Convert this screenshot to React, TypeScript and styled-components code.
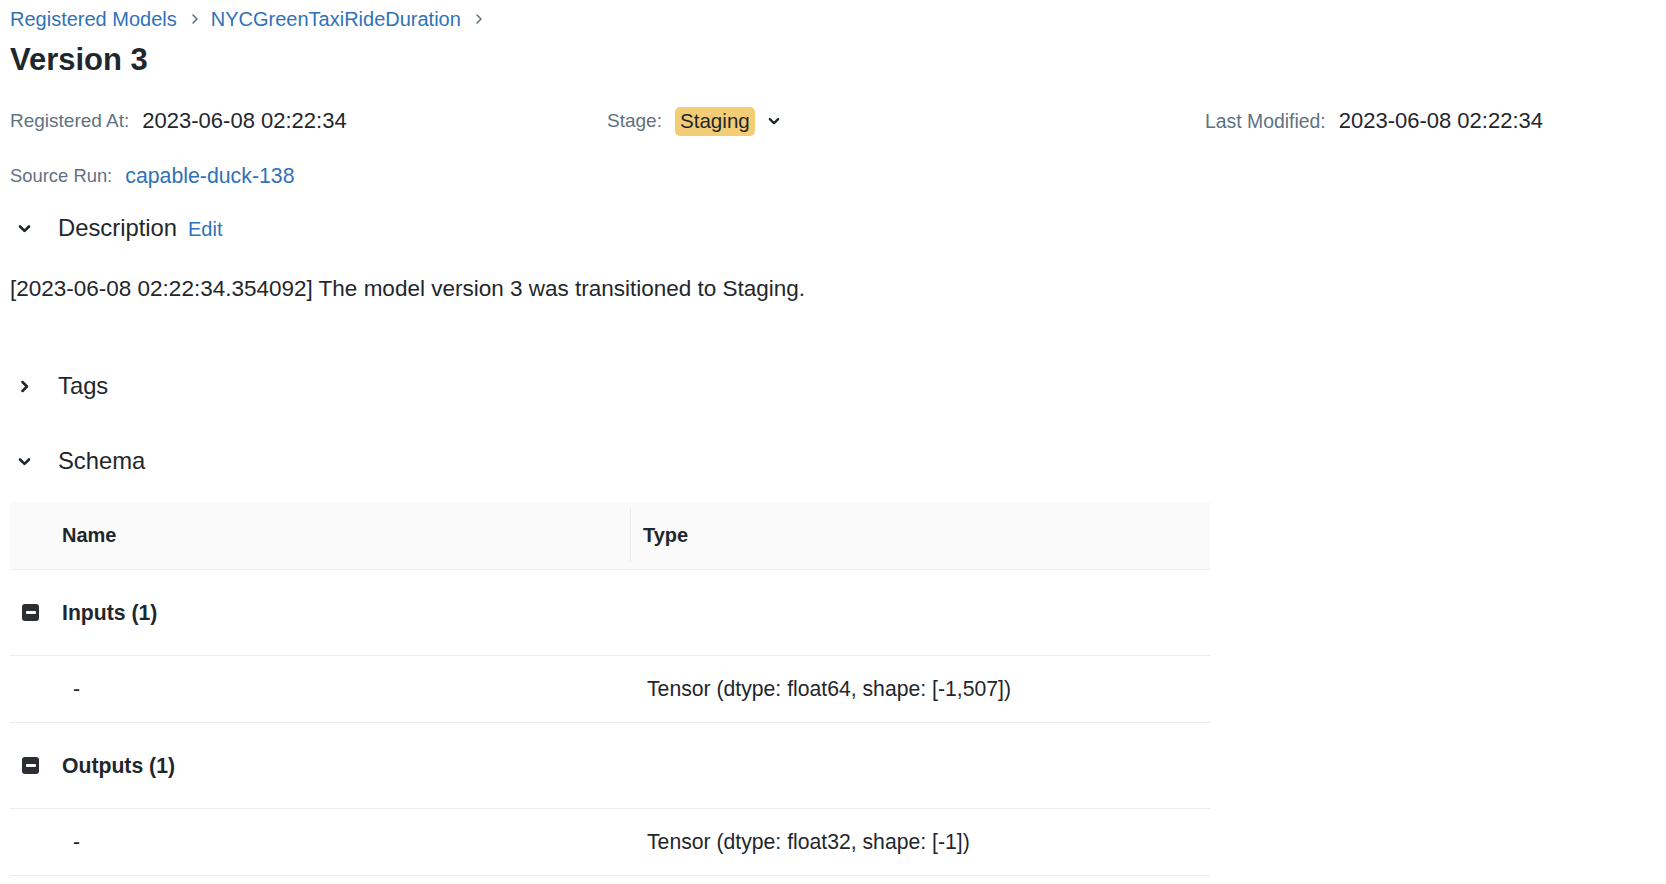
import styled, { createGlobalStyle } from 'styled-components';

const GlobalStyle = createGlobalStyle`
  *, *::before, *::after {
    box-sizing: border-box;
  }
  body {
    margin: 0;
    background: #fff;
    font-family: "Liberation Sans", Arial, sans-serif;
    color: #1f272d;
    overflow: hidden;
  }
`;

const Page = styled.div`
  padding: 0 10px;
  width: 1666px;
`;

const Breadcrumb = styled.nav`
  height: 38px;
  display: flex;
  align-items: center;
  font-size: 20px;
`;

const Crumb = styled.a`
  color: #2f72b8;
  text-decoration: none;
`;

const CrumbSep = styled.span`
  display: inline-flex;
  margin: 0 12px 0 14px;
  color: #5f7281;
`;

const Title = styled.h1`
  margin: 2px 0 0;
  height: 40px;
  line-height: 40px;
  font-size: 31px;
  font-weight: 700;
  color: #1f272d;
`;

const MetaRow = styled.div<{ $top: number }>`
  margin-top: ${(p) => p.$top}px;
  height: 40px;
  display: grid;
  grid-template-columns: 597px 598px 1fr;
  align-items: center;
`;

const MetaItem = styled.div`
  display: flex;
  align-items: center;
  gap: 13px;
`;

const Label = styled.span<{ $size?: number }>`
  font-size: ${(p) => p.$size ?? 19}px;
  color: #5f7281;
`;

const Value = styled.span`
  font-size: 22px;
  color: #1f272d;
`;

const LinkValue = styled.a`
  font-size: 21.3px;
  color: #2f72b8;
  text-decoration: none;
`;

const StageBadge = styled.span`
  display: inline-flex;
  align-items: center;
  height: 29px;
  padding: 0 5px;
  border-radius: 5px;
  background: #f3cc76;
  font-size: 20.6px;
  color: #1f272d;
`;

const StageCaret = styled.span`
  display: inline-flex;
`;

const SectionHeader = styled.div<{ $top: number }>`
  margin-top: ${(p) => p.$top}px;
  height: 40px;
  display: flex;
  align-items: center;
`;

const Toggle = styled.span`
  width: 29px;
  display: inline-flex;
  justify-content: center;
  margin-right: 19px;
`;

const SectionTitle = styled.span`
  font-size: 23.8px;
  color: #1f272d;
`;

const EditLink = styled.a`
  margin-left: 11px;
  font-size: 20px;
  color: #2f72b8;
  text-decoration: none;
  position: relative;
  top: 1px;
`;

const DescText = styled.p`
  margin: 26px 0 0;
  line-height: 30px;
  font-size: 22.5px;
  color: #1f272d;
`;

const Table = styled.div`
  margin-top: 21px;
  width: 1200px;
`;

const Row = styled.div<{ $height: number; $head?: boolean }>`
  display: grid;
  grid-template-columns: 620px 1fr;
  align-items: center;
  height: ${(p) => p.$height}px;
  border-bottom: 1px solid #ececec;
  background: ${(p) => (p.$head ? '#fafafa' : '#fff')};
`;

const HeadCell = styled.div<{ $pad: number; $divider?: boolean }>`
  position: relative;
  padding-left: ${(p) => p.$pad}px;
  font-size: 20px;
  font-weight: 600;
  color: #1f272d;
  ${(p) =>
    p.$divider &&
    `&::before {
      content: '';
      position: absolute;
      left: 0;
      top: -16px;
      bottom: -15px;
      width: 1px;
      background: #e8e8e8;
    }`}
`;

const GroupCell = styled.div`
  display: flex;
  align-items: center;
  font-size: 21.2px;
  font-weight: 700;
  color: #1f272d;
`;

const MinusBox = styled.span`
  width: 17px;
  height: 17px;
  margin-left: 12px;
  margin-right: 23px;
  border-radius: 3px;
  background: #2b2f33;
  display: inline-flex;
  align-items: center;
  justify-content: center;

  &::after {
    content: '';
    width: 10px;
    height: 3px;
    background: #fff;
    border-radius: 1px;
  }
`;

const Cell = styled.div<{ $pad: number }>`
  padding-left: ${(p) => p.$pad}px;
  font-size: 21.2px;
  color: #1f272d;
`;

const Chevron = ({ dir, size = 13, stroke = 2.6 }: { dir: 'down' | 'right'; size?: number; stroke?: number }) => (
  <svg width={size} height={size} viewBox="0 0 16 16" fill="none">
    <path
      d={dir === 'down' ? 'M2.5 5.5 L8 11 L13.5 5.5' : 'M5.5 2.5 L11 8 L5.5 13.5'}
      stroke="#1f272d"
      strokeWidth={stroke * (16 / size)}
      strokeLinecap="round"
      strokeLinejoin="round"
    />
  </svg>
);

const SepIcon = () => (
  <svg width="8" height="12" viewBox="0 0 8 12" fill="none">
    <path d="M2 2 L6 6 L2 10" stroke="#5f7281" strokeWidth="1.6" strokeLinecap="round" strokeLinejoin="round" />
  </svg>
);

const App = () => {
  return (
    <Page>
      <GlobalStyle />
      <Breadcrumb>
        <Crumb>Registered Models</Crumb>
        <CrumbSep><SepIcon /></CrumbSep>
        <Crumb>NYCGreenTaxiRideDuration</Crumb>
        <CrumbSep><SepIcon /></CrumbSep>
      </Breadcrumb>
      <Title>Version 3</Title>

      <MetaRow $top={21}>
        <MetaItem>
          <Label>Registered At:</Label>
          <Value>2023-06-08 02:22:34</Value>
        </MetaItem>
        <MetaItem>
          <Label>Stage:</Label>
          <StageBadge>Staging</StageBadge>
          <StageCaret><Chevron dir="down" size={12} stroke={2.4} /></StageCaret>
        </MetaItem>
        <MetaItem>
          <Label $size={19.4}>Last Modified:</Label>
          <Value>2023-06-08 02:22:34</Value>
        </MetaItem>
      </MetaRow>

      <MetaRow $top={15}>
        <MetaItem>
          <Label $size={18.4}>Source Run:</Label>
          <LinkValue>capable-duck-138</LinkValue>
        </MetaItem>
      </MetaRow>

      <SectionHeader $top={12}>
        <Toggle><Chevron dir="down" /></Toggle>
        <SectionTitle>Description</SectionTitle>
        <EditLink>Edit</EditLink>
      </SectionHeader>
      <DescText>[2023-06-08 02:22:34.354092] The model version 3 was transitioned to Staging.</DescText>

      <SectionHeader $top={62}>
        <Toggle><Chevron dir="right" /></Toggle>
        <SectionTitle>Tags</SectionTitle>
      </SectionHeader>

      <SectionHeader $top={35}>
        <Toggle><Chevron dir="down" /></Toggle>
        <SectionTitle>Schema</SectionTitle>
      </SectionHeader>

      <Table>
        <Row $height={68} $head>
          <HeadCell $pad={52}>Name</HeadCell>
          <HeadCell $pad={13} $divider>Type</HeadCell>
        </Row>
        <Row $height={86}>
          <GroupCell>
            <MinusBox />
            Inputs (1)
          </GroupCell>
          <div />
        </Row>
        <Row $height={67}>
          <Cell $pad={63}>-</Cell>
          <Cell $pad={17}>Tensor (dtype: float64, shape: [-1,507])</Cell>
        </Row>
        <Row $height={86}>
          <GroupCell>
            <MinusBox />
            Outputs (1)
          </GroupCell>
          <div />
        </Row>
        <Row $height={67}>
          <Cell $pad={63}>-</Cell>
          <Cell $pad={17}>Tensor (dtype: float32, shape: [-1])</Cell>
        </Row>
      </Table>
    </Page>
  );
};

export default App;
